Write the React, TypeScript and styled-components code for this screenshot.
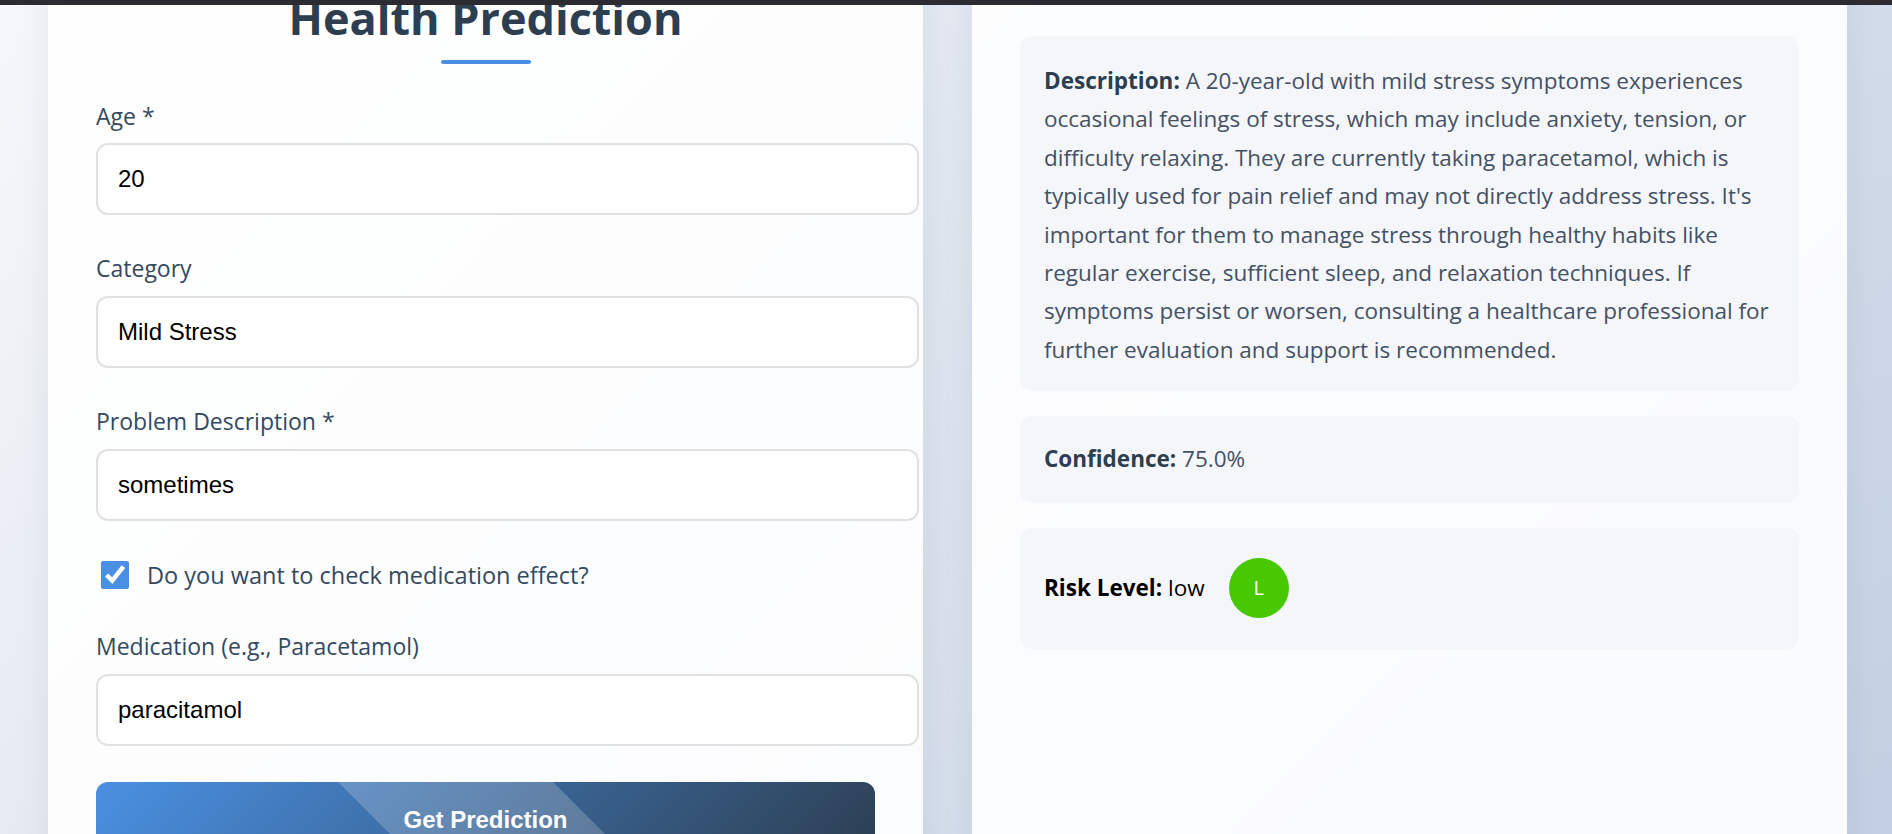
import React from 'react';
import styled, { createGlobalStyle } from 'styled-components';

const GlobalStyle = createGlobalStyle`
	html, body {
		margin: 0;
		padding: 0;
		overflow: hidden;
	}
	body {
		font-family: 'Open Sans', 'Noto Sans', sans-serif;
	}
	* {
		box-sizing: border-box;
	}
`;

const Page = styled.div`
	height: 100vh;
	display: flex;
	flex-direction: column;
`;

const TopBar = styled.div`
	height: 5px;
	flex-shrink: 0;
	background: #2c2b31;
`;

const Viewport = styled.main`
	flex: 1;
	overflow: hidden;
	background: linear-gradient(135deg, #f5f7fa 0%, #c3cfe2 100%);
`;

const Columns = styled.div`
	display: grid;
	grid-template-columns: 875px 875px;
	column-gap: 49px;
	padding: 0 45px 0 48px;
	margin-top: -62px;
`;

const Card = styled.section<{ $padTop: number }>`
	background: rgba(255, 255, 255, 0.9);
	border-radius: 20px;
	box-shadow: 0 8px 32px rgba(44, 62, 80, 0.08);
	padding: ${(p) => p.$padTop}px 48px 48px;
	min-height: 1000px;
`;

const Title = styled.h2`
	margin: 0;
	text-align: center;
	font-size: 45px;
	line-height: 1.2;
	font-weight: 700;
	color: #2c3e50;

	&::after {
		content: '';
		display: block;
		width: 90px;
		height: 4px;
		margin: 15px auto 0;
		border-radius: 2px;
		background: #4a90e2;
	}
`;

const Form = styled.form`
	margin-top: 38.5px;
`;

const Field = styled.div<{ $gap?: number }>`
	margin-bottom: ${(p) => p.$gap ?? 40}px;
`;

const Label = styled.label`
	display: block;
	font-size: 23px;
	line-height: 1.2;
	font-weight: 500;
	color: #34495e;
	margin-bottom: 13.3px;
`;

const TextInput = styled.input`
	box-sizing: content-box;
	width: 100%;
	padding: 20px;
	border: 2px solid #e1e1e1;
	border-radius: 12px;
	background: #fff;
	color: #000;
	font-family: 'Liberation Sans', Arial, sans-serif;
	font-size: 24px;
	outline: none;
`;

const CheckRow = styled.label`
	display: flex;
	align-items: center;
	gap: 18px;
	margin-bottom: 44px;
	font-size: 23.5px;
	line-height: 1.2;
	font-weight: 500;
	color: #34495e;
`;

const Check = styled.input`
	width: 28px;
	height: 28px;
	margin: 0 0 0 5px;
	accent-color: #4a90e2;
`;

const SubmitButton = styled.button`
	position: relative;
	overflow: hidden;
	display: block;
	width: 100%;
	padding: 24px;
	border: none;
	border-radius: 12px;
	background: linear-gradient(135deg, #4a90e2 0%, #2c3e50 100%);
	color: #fff;
	font-family: 'Liberation Sans', Arial, sans-serif;
	font-size: 24px;
	font-weight: 700;
	cursor: pointer;

	&::before {
		content: '';
		position: absolute;
		top: 0;
		bottom: 0;
		left: 36%;
		width: 27.6%;
		background: rgba(255, 255, 255, 0.2);
		transform: skewX(45deg);
	}
`;

const ResultBlock = styled.div<{ $padTop?: number; $padBottom?: number }>`
	background: rgba(243, 245, 249, 0.85);
	border-radius: 12px;
	padding: ${(p) => p.$padTop ?? 24}px 24px ${(p) => p.$padBottom ?? 24}px;
	margin-bottom: 25px;
	font-size: 22.5px;
	line-height: 38.4px;
	color: #445164;
`;

const Text = styled.p`
	margin: 0;
`;

const Key = styled.strong`
	color: #2c3e50;
	font-weight: 700;
`;

const RiskRow = styled.div`
	display: flex;
	align-items: center;
	min-height: 73px;
	color: #000;

	strong {
		font-weight: 700;
	}
`;

const RiskBadge = styled.span<{ $color: string }>`
	width: 60px;
	height: 60px;
	margin-left: 24px;
	border-radius: 50%;
	background: ${(p) => p.$color};
	color: #fff;
	display: flex;
	align-items: center;
	justify-content: center;
	font-size: 20px;
	line-height: 1;
`;

const prediction = {
	description:
		"A 20-year-old with mild stress symptoms experiences occasional feelings of stress, which may include anxiety, tension, or difficulty relaxing. They are currently taking paracetamol, which is typically used for pain relief and may not directly address stress. It's important for them to manage stress through healthy habits like regular exercise, sufficient sleep, and relaxation techniques. If symptoms persist or worsen, consulting a healthcare professional for further evaluation and support is recommended.",
	confidence: 0.75,
	risk: 'low',
};

const riskColors: Record<string, string> = {
	low: '#47c800',
	medium: '#f0a500',
	high: '#e74c3c',
};

export default function App() {
	return (
		<Page>
			<GlobalStyle />
			<TopBar />
			<Viewport>
				<Columns>
					<Card $padTop={48}>
						<Title>Health Prediction</Title>
						<Form onSubmit={(e) => e.preventDefault()}>
							<Field>
								<Label htmlFor="age">Age *</Label>
								<TextInput id="age" type="text" defaultValue="20" />
							</Field>
							<Field>
								<Label htmlFor="category">Category</Label>
								<TextInput id="category" type="text" defaultValue="Mild Stress" />
							</Field>
							<Field>
								<Label htmlFor="problem">Problem Description *</Label>
								<TextInput id="problem" type="text" defaultValue="sometimes" />
							</Field>
							<CheckRow>
								<Check type="checkbox" defaultChecked />
								Do you want to check medication effect?
							</CheckRow>
							<Field $gap={36}>
								<Label htmlFor="medication">Medication (e.g., Paracetamol)</Label>
								<TextInput id="medication" type="text" defaultValue="paracitamol" />
							</Field>
							<SubmitButton type="submit">Get Prediction</SubmitButton>
						</Form>
					</Card>

					<Card $padTop={93}>
						<ResultBlock $padTop={26} $padBottom={22}>
							<Text>
								<Key>Description:</Key> {prediction.description}
							</Text>
						</ResultBlock>
						<ResultBlock>
							<Text>
								<Key>Confidence:</Key> {(prediction.confidence * 100).toFixed(1)}%
							</Text>
						</ResultBlock>
						<ResultBlock>
							<RiskRow>
								<span>
									<strong>Risk Level:</strong> {prediction.risk}
								</span>
								<RiskBadge $color={riskColors[prediction.risk]}>
									{prediction.risk.charAt(0).toUpperCase()}
								</RiskBadge>
							</RiskRow>
						</ResultBlock>
					</Card>
				</Columns>
			</Viewport>
		</Page>
	);
}
